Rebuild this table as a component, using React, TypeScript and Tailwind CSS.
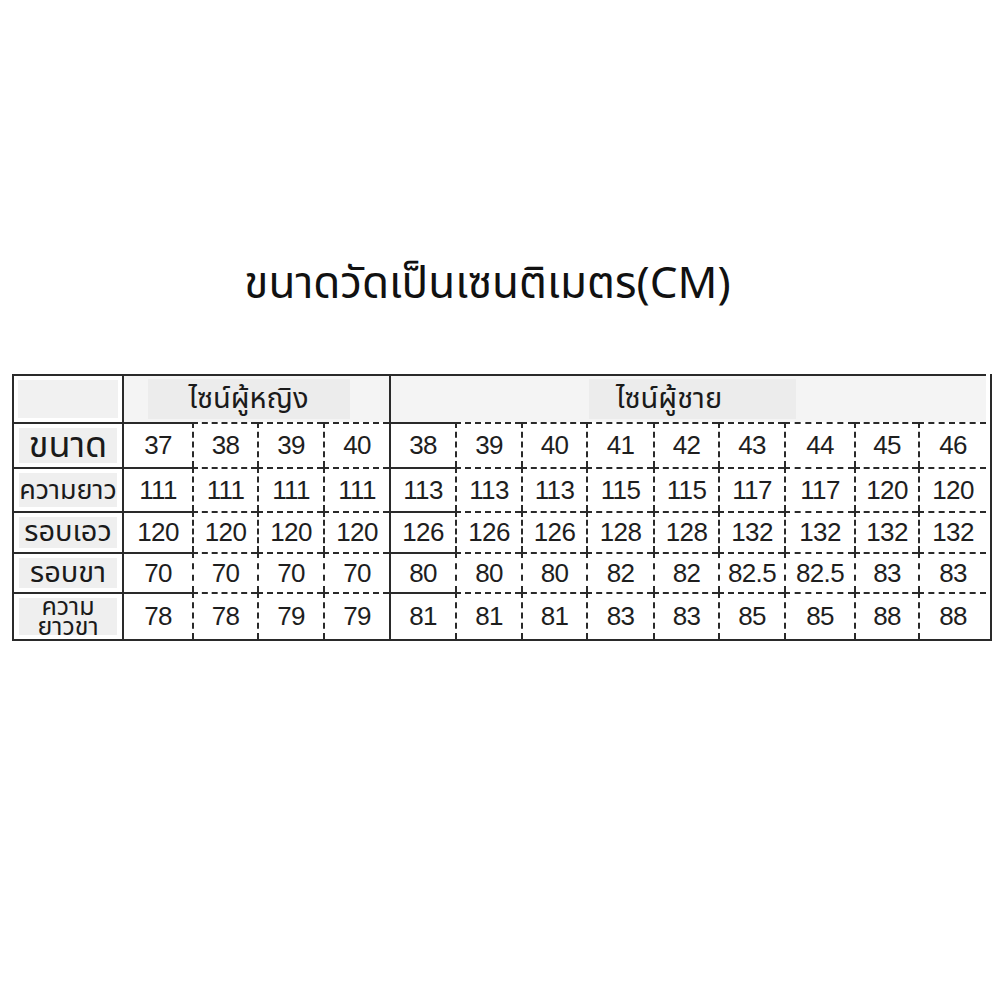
const women = ["37", "38", "39", "40"]
const men = ["38", "39", "40", "41", "42", "43", "44", "45", "46"]

const thai = "font-['Noto_Sans_Thai','Noto_Sans','DejaVu_Sans',sans-serif]"
const num = "font-['Liberation_Sans',Arial,sans-serif]"

const rows = [
  {
    label: <span className="text-[36px] leading-none">ขนาด</span>,
    w: women,
    m: men,
  },
  {
    label: <span className="text-[27px] leading-none">ความยาว</span>,
    w: ["111", "111", "111", "111"],
    m: ["113", "113", "113", "115", "115", "117", "117", "120", "120"],
  },
  {
    label: <span className="text-[29px] leading-none">รอบเอว</span>,
    w: ["120", "120", "120", "120"],
    m: ["126", "126", "126", "128", "128", "132", "132", "132", "132"],
  },
  {
    label: <span className="text-[29px] leading-none">รอบขา</span>,
    w: ["70", "70", "70", "70"],
    m: ["80", "80", "80", "82", "82", "82.5", "82.5", "83", "83"],
  },
  {
    label: (
      <span className="flex flex-col items-center text-[25px] leading-[20px]">
        <span>ความ</span>
        <span>ยาวขา</span>
      </span>
    ),
    w: ["78", "78", "79", "79"],
    m: ["81", "81", "81", "83", "83", "85", "85", "88", "88"],
  },
]

function Cell({ v, first }: { v: string; first: boolean }) {
  return (
    <div
      className={`flex items-center justify-center border-t-2 border-l-2 border-[#2a2a2a] ${first ? "" : "border-dashed"} ${num} text-[26px] text-[#1e1e1e] tracking-tight`}
    >
      {v}
    </div>
  )
}

export default function App() {
  return (
    <div className="w-[1000px] h-[1000px] bg-white pt-[250px]">
      <h1 className={`text-center ${thai} text-[44px] leading-[70px] text-[#111] pr-[25px]`}>
        ขนาดวัดเป็นเซนติเมตร(CM)
      </h1>

      <div className="ml-[12px] mt-[54px] w-[980px] border-2 border-t-0 border-[#2a2a2a]">
        <div className="grid grid-cols-[108px_70px_65px_66px_66px_66px_66px_65px_67px_65px_66px_70px_64px_68px] grid-rows-[48px_45px_44px_41px_40px_47px]">
          {/* header */}
          <div className="border-t-2 border-[#2a2a2a] p-[4px]">
            <div className="h-full w-full bg-[#f1f1f1]" />
          </div>
          <div className="col-span-4 flex items-center justify-center border-t-2 border-l-2 border-[#2a2a2a] bg-[#f4f4f4] py-[3px]">
            <div className={`mr-[16px] flex h-full w-[202px] items-center justify-center bg-[#ececec] ${thai} text-[29px] leading-none text-[#1a1a1a]`}>
              ไซน์ผู้หญิง
            </div>
          </div>
          <div className="col-span-9 flex items-center justify-center border-t-2 border-l-2 border-[#2a2a2a] bg-[#f4f4f4] py-[3px]">
            <div className={`ml-[8px] flex h-full w-[207px] items-center justify-start pl-[27px] bg-[#ececec] ${thai} text-[29px] leading-none text-[#1a1a1a]`}>
              ไซน์ผู้ชาย
            </div>
          </div>

          {rows.map((r, ri) => (
            <div key={ri} className="contents">
              <div className="flex items-center justify-center border-t-2 border-[#2a2a2a] px-[5px] py-[4px]">
                <div className={`flex h-full w-full items-center justify-center bg-[#efefef] ${thai} text-[#1a1a1a]`}>
                  {r.label}
                </div>
              </div>
              {r.w.map((v, i) => (
                <Cell key={"w" + i} v={v} first={i === 0} />
              ))}
              {r.m.map((v, i) => (
                <Cell key={"m" + i} v={v} first={i === 0} />
              ))}
            </div>
          ))}
        </div>
      </div>
    </div>
  )
}
